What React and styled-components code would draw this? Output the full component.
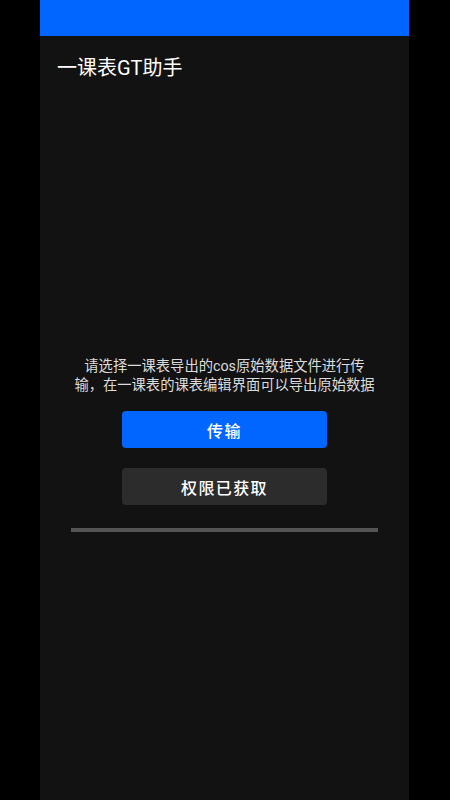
import styled, { createGlobalStyle } from "styled-components";

const GlobalStyle = createGlobalStyle`
  html, body {
    margin: 0;
    padding: 0;
    background: #000;
  }
  body {
    font-family: Roboto, "Noto Sans CJK SC", sans-serif;
  }
`;

const Screen = styled.div`
  width: 369px;
  min-height: 800px;
  margin-left: 40px;
  background: #121212;
  display: flex;
  flex-direction: column;
`;

const StatusBar = styled.div`
  height: 36px;
  background: #0066ff;
`;

const TitleBar = styled.header`
  height: 61px;
  display: flex;
  align-items: center;
  padding: 0 17px;
`;

const Title = styled.h1`
  margin: 0;
  font-size: 20px;
  font-weight: 400;
  color: #fff;
`;

const Main = styled.main`
  display: flex;
  flex-direction: column;
  align-items: center;
  padding-top: 260px;
`;

const Hint = styled.p`
  width: 307px;
  margin: 0;
  font-size: 14.3px;
  line-height: 19px;
  color: #dcdcdc;
  text-align: center;
`;

const Button = styled.button`
  width: 205px;
  height: 37px;
  margin-top: ${(p) => p.$gap}px;
  border: none;
  border-radius: 4px;
  background: ${(p) => (p.$primary ? "#0066ff" : "#2c2c2c")};
  color: #fff;
  font-family: inherit;
  font-size: 16px;
  font-weight: 500;
  letter-spacing: 1.4px;
  cursor: pointer;
`;

const Progress = styled.div`
  width: 307px;
  height: 4px;
  margin-top: 23px;
  background: #555;
`;

export default function App() {
  return (
    <>
      <GlobalStyle />
      <Screen>
        <StatusBar />
        <TitleBar>
          <Title>一课表GT助手</Title>
        </TitleBar>
        <Main>
          <Hint>
            请选择一课表导出的cos原始数据文件进行传输，在一课表的课表编辑界面可以导出原始数据
          </Hint>
          <Button type="button" $primary $gap={16}>
            传输
          </Button>
          <Button type="button" $gap={20}>
            权限已获取
          </Button>
          <Progress />
        </Main>
      </Screen>
    </>
  );
}
